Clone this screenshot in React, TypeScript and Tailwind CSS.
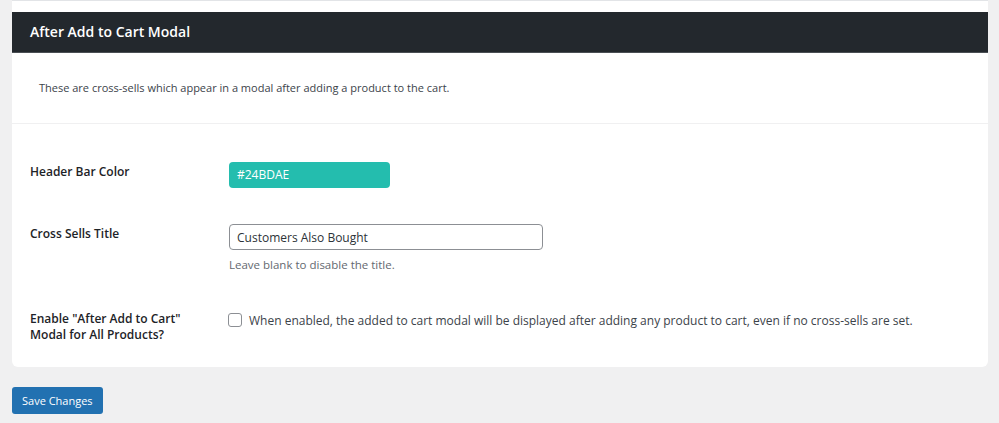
import React from "react";

export default function App() {
  return (
    <div
      className="w-[999px] h-[423px] bg-[#f0f0f1] text-[#1d2327] overflow-hidden"
      style={{ fontFamily: '"Open Sans", "Noto Sans", sans-serif' }}
    >
      <div className="ml-[12px] w-[976px] bg-white border-t border-[#e2e4e7] rounded-b-[6px] pt-[11px]">
        <div className="h-[41px] bg-[#23282d] border-b border-[#4a4f54] flex items-center pl-[18px]">
          <h2 className="text-white text-[14px] font-semibold leading-none">After Add to Cart Modal</h2>
        </div>
        <div className="h-[71px] border-b border-[#f0f0f1] flex items-center pl-[27px] pt-[1px]">
          <p className="text-[11px] text-[#3c434a]">
            These are cross-sells which appear in a modal after adding a product to the cart.
          </p>
        </div>
        <div className="pt-[38px] pb-[24px]">
          <div className="flex pl-[18px]">
            <div className="w-[199px] text-[12px] font-semibold pt-[1px]">Header Bar Color</div>
            <div className="w-[161px] h-[26px] rounded-[4px] bg-[#24BDAE] flex items-center pl-[8px] text-white text-[12px]">
              #24BDAE
            </div>
          </div>
          <div className="flex pl-[18px] mt-[36px]">
            <div className="w-[199px] text-[12px] font-semibold pt-[1px]">Cross Sells Title</div>
            <div className="flex flex-col">
              <input
                readOnly
                value="Customers Also Bought"
                className="w-[314px] h-[26px] rounded-[4px] border border-[#8c8f94] px-[7px] text-[12px] text-[#2c3338] outline-none"
                style={{ fontFamily: '"Open Sans", "Noto Sans", sans-serif' }}
              />
              <div className="text-[11.5px] text-[#646970] mt-[6px]">Leave blank to disable the title.</div>
            </div>
          </div>
          <div className="flex pl-[18px] mt-[38px]">
            <div className="w-[198px] text-[12px] font-semibold leading-[16px]">
              Enable "After Add to Cart"
              <br />
              Modal for All Products?
            </div>
            <div className="flex items-start pt-[1px]">
              <span className="w-[14px] h-[14px] border border-[#8c8f94] rounded-[3px] bg-white mt-[1px]" />
              <span className="ml-[7px] text-[12px] text-[#3c434a]">
                When enabled, the added to cart modal will be displayed after adding any product to cart, even if no cross-sells are set.
              </span>
            </div>
          </div>
        </div>
      </div>
      <div className="ml-[12px] mt-[20px]">
        <button className="h-[27px] px-[10px] rounded-[3px] bg-[#2271b1] text-white text-[11px] leading-none">
          Save Changes
        </button>
      </div>
    </div>
  );
}
